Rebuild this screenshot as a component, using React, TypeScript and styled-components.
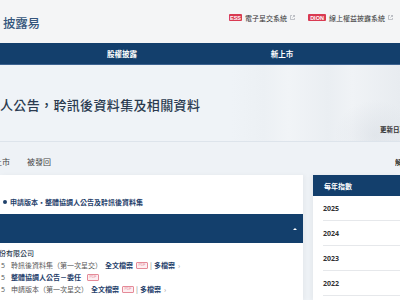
import React from "react";
import styled, { createGlobalStyle } from "styled-components";

const GlobalStyle = createGlobalStyle`
  html, body { margin: 0; padding: 0; }
  body {
    width: 400px;
    height: 300px;
    overflow: hidden;
    background: #eef2f6;
    font-family: "Noto Sans CJK TC", "Noto Sans", sans-serif;
  }
`;

const Page = styled.div`
  width: 400px;
  height: 300px;
  overflow: hidden;
  display: flex;
  flex-direction: column;
`;

const Header = styled.header`
  height: 43px;
  flex: none;
  background: #f4f5f6;
  display: flex;
  align-items: center;
  justify-content: space-between;
  padding: 0 7px 0 3px;
  box-sizing: border-box;
`;

const Logo = styled.div`
  font-size: 12.5px;
  color: #34557c;
  font-weight: 500;
  letter-spacing: -0.2px;
  margin-top: 2px;
`;

const SysLinks = styled.div`
  display: flex;
  align-items: center;
  gap: 13px;
  margin-top: -8px;
`;

const SysLink = styled.div`
  display: flex;
  align-items: center;
  gap: 3px;
  font-size: 7px;
  color: #333;
`;

const Badge = styled.span<{ $w: number }>`
  display: inline-flex;
  align-items: center;
  justify-content: center;
  width: ${(p) => p.$w}px;
  height: 7px;
  background: #d93a52;
  color: #fff;
  font-family: "Liberation Sans", sans-serif;
  font-size: 5.5px;
  font-weight: 700;
  border-radius: 1px;
`;

const ExtIcon = () => (
  <svg width="5" height="5" viewBox="0 0 10 10" fill="none" stroke="#9aa0a8" strokeWidth="1.2">
    <path d="M4 1H1v8h8V6" />
    <path d="M6 1h3v3M9 1L5 5" />
  </svg>
);

const Nav = styled.nav`
  height: 21px;
  flex: none;
  background: #133f6c;
  border-bottom: 1px solid #3d6390;
  display: flex;
  padding-left: 42px;
`;

const NavItem = styled.div`
  width: 160px;
  text-align: center;
  line-height: 21px;
  color: #fff;
  font-size: 7.5px;
  font-weight: 700;
`;

const Hero = styled.section`
  height: 77px;
  flex: none;
  box-sizing: border-box;
  border-bottom: 1px solid #dde4eb;
  background:
    radial-gradient(ellipse 40px 35px at 375px 70px, rgba(200, 207, 216, 0.3), rgba(200, 207, 216, 0)),
    linear-gradient(90deg, #eff3f7 0%, #eff3f7 58%, #ecf0f4 66%, #f1f4f7 72%, #eaeef2 82%, #f0f3f6 88%, #e8ecf0 100%);
  padding-top: 32px;
  white-space: nowrap;
`;

const Title = styled.h1`
  margin: 0;
  font-size: 13px;
  line-height: 16px;
  font-weight: 500;
  color: #2b3b50;
  letter-spacing: 0.35px;
`;

const Updated = styled.div`
  margin-top: 12px;
  padding-left: 380px;
  font-size: 6.5px;
  font-weight: 700;
  color: #333;
  line-height: 8px;
`;

const Tabs = styled.div`
  height: 33px;
  flex: none;
  display: flex;
  align-items: flex-start;
  padding-top: 14px;
  box-sizing: border-box;
  white-space: nowrap;
`;

const Tab = styled.div<{ $cut?: boolean }>`
  font-size: 8px;
  line-height: 12px;
  color: #444;
  margin-left: ${(p) => (p.$cut ? "-6px" : "0")};
  margin-right: 17px;
`;

const TabSpacer = styled.div`
  flex: 1;
`;

const TabRight = styled.div`
  font-size: 7px;
  line-height: 12px;
  font-weight: 700;
  color: #333;
  width: 5px;
  overflow: hidden;
`;

const Content = styled.div`
  flex: 1;
  display: flex;
  gap: 10px;
`;

const Card = styled.div`
  width: 303px;
  background: #fff;
  padding-top: 22px;
  box-shadow: 2px 0 4px rgba(0, 0, 0, 0.04);
`;

const SectionLink = styled.div`
  display: flex;
  align-items: center;
  gap: 3px;
  padding-left: 3px;
  font-size: 7px;
  line-height: 10px;
  font-weight: 700;
  color: #1f416b;
`;

const Dot = styled.span`
  width: 4px;
  height: 4px;
  border-radius: 50%;
  background: #1f416b;
`;

const Bar = styled.div`
  margin-top: 7px;
  height: 29px;
  background: #133f6c;
  display: flex;
  align-items: center;
  justify-content: flex-end;
  padding-right: 6px;
`;

const Caret = styled.span`
  width: 0;
  height: 0;
  border-left: 2px solid transparent;
  border-right: 2px solid transparent;
  border-bottom: 2.5px solid #fff;
`;

const List = styled.div`
  padding-top: 4px;
  white-space: nowrap;
`;

const Company = styled.div`
  font-size: 7px;
  line-height: 12px;
  color: #2b3b50;
  font-weight: 500;
  margin-left: -1px;
`;

const Row = styled.div`
  display: flex;
  align-items: center;
  height: 12px;
  font-size: 7px;
  color: #555;
`;

const RowDate = styled.span`
  width: 10px;
  font-family: "Open Sans", sans-serif;
  padding-left: 1px;
`;

const RowTitle = styled.span<{ $link?: boolean }>`
  color: ${(p) => (p.$link ? "#1f416b" : "#555")};
  font-weight: ${(p) => (p.$link ? 700 : 400)};
  margin-right: 3px;
`;

const FileLink = styled.span`
  color: #1f416b;
  font-weight: 700;
`;

const Pdf = styled.span`
  display: inline-flex;
  align-items: center;
  justify-content: center;
  width: 10px;
  height: 5px;
  margin: 0 2px 0 3px;
  border: 0.8px solid #e58a98;
  border-radius: 1px;
  background: #fdeef1;
  color: #e58a98;
  font-family: "Liberation Sans", sans-serif;
  font-size: 3.5px;
`;

const Pipe = styled.span`
  color: #777;
  margin-right: 2px;
`;

const Chevron = styled.span`
  color: #999;
  margin-left: 3px;
  font-size: 7px;
`;

const Side = styled.aside`
  flex: 1;
  background: #fff;
  box-shadow: -2px 0 4px rgba(0, 0, 0, 0.04);
`;

const SideHead = styled.div`
  height: 21px;
  background: #133f6c;
  color: #fff;
  font-size: 7px;
  font-weight: 700;
  display: flex;
  align-items: center;
  padding-left: 11px;
`;

const Year = styled.div`
  height: 24px;
  margin-left: 10px;
  border-bottom: 1px solid #e6e8eb;
  display: flex;
  align-items: center;
  font-family: "Open Sans", sans-serif;
  font-size: 7px;
  font-weight: 700;
  color: #333;
`;

type Doc = { title: string; link?: boolean; multi?: boolean };

const docs: Doc[] = [
  { title: "聆訊後資料集（第一次呈交）", multi: true },
  { title: "整體協調人公告－委任", link: true },
  { title: "申請版本（第一次呈交）", multi: true },
];

const years = ["2025", "2024", "2023", "2022"];

export default function App() {
  return (
    <Page>
      <GlobalStyle />
      <Header>
        <Logo>披露易</Logo>
        <SysLinks>
          <SysLink>
            <Badge $w={13}>ESS</Badge>
            電子呈交系統
            <ExtIcon />
          </SysLink>
          <SysLink>
            <Badge $w={18}>DION</Badge>
            線上權益披露系統
            <ExtIcon />
          </SysLink>
        </SysLinks>
      </Header>
      <Nav>
        <NavItem>股權披露</NavItem>
        <NavItem>新上市</NavItem>
      </Nav>
      <Hero>
        <Title>人公告，聆訊後資料集及相關資料</Title>
        <Updated>更新日期</Updated>
      </Hero>
      <Tabs>
        <Tab $cut>上市</Tab>
        <Tab>被發回</Tab>
        <TabSpacer />
        <TabRight>解</TabRight>
      </Tabs>
      <Content>
        <Card>
          <SectionLink>
            <Dot />
            申請版本・整體協調人公告及聆訊後資料集
          </SectionLink>
          <Bar>
            <Caret />
          </Bar>
          <List>
            <Company>份有限公司</Company>
            {docs.map((d) => (
              <Row key={d.title}>
                <RowDate>5</RowDate>
                <RowTitle $link={d.link}>{d.title}</RowTitle>
                {d.multi ? (
                  <>
                    <FileLink>全文檔案</FileLink>
                    <Pdf>PDF</Pdf>
                    <Pipe>|</Pipe>
                    <FileLink>多檔案</FileLink>
                    <Chevron>›</Chevron>
                  </>
                ) : (
                  <Pdf>PDF</Pdf>
                )}
              </Row>
            ))}
          </List>
        </Card>
        <Side>
          <SideHead>每年指數</SideHead>
          {years.map((y) => (
            <Year key={y}>{y}</Year>
          ))}
        </Side>
      </Content>
    </Page>
  );
}
